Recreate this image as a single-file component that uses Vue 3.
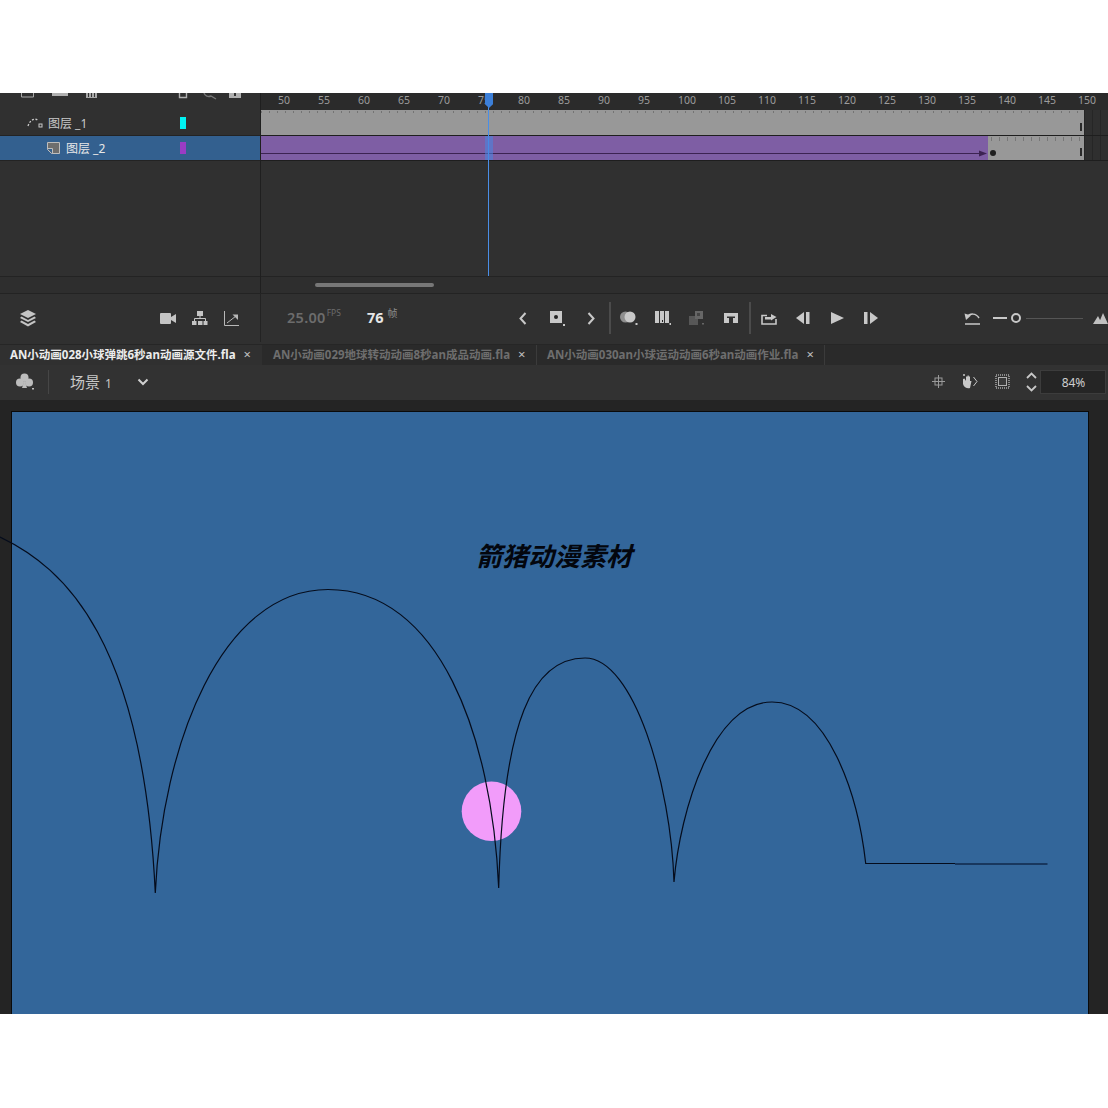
<script setup>
const frames = Array.from({ length: 21 }, (_, i) => 50 + i * 5)
const tabs = [
  { name: 'AN小动画028小球弹跳6秒an动画源文件.fla', active: true, w: 262 },
  { name: 'AN小动画029地球转动动画8秒an成品动画.fla', active: false, w: 275 },
  { name: 'AN小动画030an小球运动动画6秒an动画作业.fla', active: false, w: 288 }
]
const curve = [
  'M0 537C65 568 143 640 155.3 893',
  'C162 745 221 589.5 328 589.5',
  'C439 589.5 492 735 498.7 888',
  'C503 720 533 658 585 658',
  'C634 658 671 785 674 882',
  'C680 810 713 702 772 702',
  'C828 702 858 795 865.7 863.3',
  'L955 863.5'
].join('')
</script>

<template>
  <div class="page">
    <div class="app">
      <section class="timeline">
        <div class="layers">
          <svg class="header-icons" width="260" height="17" viewBox="0 0 260 17">
            <path d="M21.5 0V4H33.5V0" fill="none" stroke="#a8a8a8" />
            <rect x="52" y="0" width="16" height="3" fill="#b0b0b0" />
            <path d="M86 0H97V5H86Z" fill="#a8a8a8" />
            <path d="M88.5 0V4M91.5 0V4M94.5 0V4" stroke="#333" />
            <path d="M179.5 0V4.5H186.5V0" fill="none" stroke="#b0b0b0" stroke-width="1.4" />
            <path d="M204 0A5 5 0 0 0 211 3L216 6" fill="none" stroke="#777" stroke-width="1.4" />
            <path d="M229 0H241V5H229Z" fill="#b0b0b0" />
            <path d="M235 0V3" stroke="#333" stroke-width="2" />
          </svg>
          <div class="layer-row">
            <svg class="layer-icon guide" width="16" height="12" viewBox="0 0 16 12">
              <path d="M1 9C3 3 7 1 11 3" fill="none" stroke="#c8c8c8" stroke-width="1.3" stroke-dasharray="2 1.6" />
              <rect x="12" y="7" width="3" height="3" fill="none" stroke="#c8c8c8" />
            </svg>
            <span class="layer-name">图层 _1</span>
            <i class="chip cyan"></i>
          </div>
          <div class="layer-row selected">
            <svg class="layer-icon mask" width="13" height="12" viewBox="0 0 13 12">
              <path d="M.5.5H12.5V11.5H4.5L.5 7.5Z" fill="#6e6e6e" stroke="#bdbdbd" />
              <path d="M.5 6.5H5.5V11.5" fill="#33618f" stroke="#bdbdbd" />
            </svg>
            <span class="layer-name">图层 _2</span>
            <i class="chip violet"></i>
          </div>
          <div class="layers-fill"></div>
          <div class="scroll-spacer"></div>
        </div>
        <div class="tracks">
          <div class="ruler">
            <span v-for="f in frames" :key="f" class="frame">{{ f }}</span>
          </div>
          <div class="track-row one">
            <div class="span-gray dotted">
              <b class="end-mark"></b>
            </div>
            <div class="over"></div>
          </div>
          <div class="track-row two">
            <div class="tween">
              <svg class="tween-arrow" width="727" height="24" viewBox="0 0 727 24">
                <path d="M0 17.5H719" stroke="#3c2352" />
                <path d="M718 14.5L726 17.5L718 20.5Z" fill="#3c2352" />
              </svg>
            </div>
            <div class="span-rest">
              <i class="key"></i>
              <b class="end-mark"></b>
            </div>
            <div class="over"></div>
          </div>
          <div class="tracks-fill"></div>
          <div class="scrollbar-row"><i class="thumb"></i></div>
          <div class="playhead">
            <div class="handle"></div>
            <div class="glow"></div>
          </div>
        </div>
      </section>

      <section class="toolbar">
        <div class="tool-left">
          <svg class="stack" width="16" height="17" viewBox="0 0 16 17">
            <path d="M8 0L16 4L8 8L0 4Z" fill="#c4c4c4" />
            <path d="M1.5 6.5L8 10L14.5 6.5L16 8L8 12L0 8Z" fill="#c4c4c4" />
            <path d="M1.5 10.5L8 14L14.5 10.5L16 12L8 16.5L0 12Z" fill="#c4c4c4" />
          </svg>
          <div class="left-icons">
            <svg width="16" height="11" viewBox="0 0 16 11">
              <rect x="0" y="0" width="11" height="11" rx="1" fill="#c4c4c4" />
              <path d="M11 4L16 1V10L11 7Z" fill="#c4c4c4" />
            </svg>
            <svg width="16" height="15" viewBox="0 0 16 15">
              <rect x="5" y="0" width="6" height="5" fill="#c4c4c4" />
              <path d="M8 5V8M2.5 10V7.5H13.5V10" fill="none" stroke="#c4c4c4" />
              <rect x="0" y="10" width="4.5" height="4" fill="#c4c4c4" />
              <rect x="6" y="10" width="4.5" height="4" fill="#c4c4c4" />
              <rect x="11.5" y="10" width="4" height="4" fill="#c4c4c4" />
            </svg>
            <svg width="16" height="15" viewBox="0 0 16 15">
              <path d="M.5 0V14.5H15" fill="none" stroke="#b8b8b8" />
              <path d="M3 12L12 5" stroke="#b8b8b8" />
              <path d="M8.5 3.5H14V9Z" fill="#b8b8b8" />
            </svg>
          </div>
        </div>
        <div class="tool-main">
          <div class="readout">
            <span class="fps">25.00<sup>FPS</sup></span>
            <span class="current">76<sup>帧</sup></span>
          </div>
          <div class="tool-group first">
            <span class="tool"><svg width="8" height="13" viewBox="0 0 8 13"><path d="M6.5 1L1.5 6.5L6.5 12" fill="none" stroke="#c8c8c8" stroke-width="2" /></svg></span>
            <span class="tool"><svg width="15" height="15" viewBox="0 0 15 15"><rect width="12" height="12" fill="#c8c8c8" /><circle cx="6" cy="6" r="2" fill="#222" /><rect x="13" y="13" width="2" height="2" fill="#c8c8c8" /></svg></span>
            <span class="tool"><svg width="8" height="13" viewBox="0 0 8 13"><path d="M1.5 1L6.5 6.5L1.5 12" fill="none" stroke="#c8c8c8" stroke-width="2" /></svg></span>
          </div>
          <i class="vsep"></i>
          <div class="tool-group">
            <span class="tool"><svg width="18" height="14" viewBox="0 0 18 14"><circle cx="5.5" cy="6" r="5.5" fill="#8e8e8e" /><circle cx="10" cy="6" r="5.5" fill="#c8c8c8" /><rect x="15.5" y="12" width="2" height="2" fill="#c8c8c8" /></svg></span>
            <span class="tool"><svg width="16" height="14" viewBox="0 0 16 14"><rect width="4" height="12" fill="#c8c8c8" /><rect x="5" width="4" height="12" fill="#c8c8c8" /><rect x="10" width="4" height="12" fill="#c8c8c8" /><rect x="7" y="9" width="1" height="2" fill="#222" /><rect x="14.5" y="12" width="1.5" height="2" fill="#c8c8c8" /></svg></span>
            <span class="tool"><svg width="16" height="15" viewBox="0 0 16 15"><rect y="5" width="9" height="9" fill="#575757" /><rect x="6" width="8" height="8" fill="#666" /><rect x="8" y="2" width="3" height="3" fill="#444" /><rect x="13" y="12" width="2" height="1.5" fill="#666" /></svg></span>
            <span class="tool"><svg width="14" height="11" viewBox="0 0 14 11"><path d="M0 0H14V10H9V5H11V3.5H3V5H5V10H0Z" fill="#c8c8c8" /></svg></span>
          </div>
          <i class="vsep"></i>
          <div class="tool-group">
            <span class="tool"><svg width="16" height="13" viewBox="0 0 16 13"><path d="M6 3.5H1V12H15V7" fill="none" stroke="#c8c8c8" stroke-width="1.6" /><path d="M4 7.5V5H10V2L15.5 5L10 8.5V7.5Z" fill="#c8c8c8" /></svg></span>
            <span class="tool"><svg width="14" height="12" viewBox="0 0 14 12"><path d="M8 0V12L0 6Z" fill="#c8c8c8" /><rect x="10" width="3.5" height="12" fill="#c8c8c8" /></svg></span>
            <span class="tool"><svg width="13" height="12" viewBox="0 0 13 12"><path d="M0 0L13 6L0 12Z" fill="#c8c8c8" /></svg></span>
            <span class="tool"><svg width="14" height="12" viewBox="0 0 14 12"><rect width="3.5" height="12" fill="#c8c8c8" /><path d="M6 0L14 6L6 12Z" fill="#c8c8c8" /></svg></span>
          </div>
          <div class="zoomer">
            <svg width="17" height="13" viewBox="0 0 17 13">
              <path d="M1 12H16M3 5C6 1 12 1 15 6" fill="none" stroke="#c8c8c8" stroke-width="1.5" />
              <path d="M.5 1.5L7 3.5L2 8Z" fill="#c8c8c8" />
            </svg>
            <div class="slider">
              <i class="slide-on"></i>
              <i class="knob"></i>
              <i class="slide-off"></i>
            </div>
            <svg class="peaks" width="15" height="11" viewBox="0 0 15 11">
              <path d="M0 11L5 3L9 11ZM5.5 11L10 0L15 11Z" fill="#c0c0c0" />
            </svg>
          </div>
        </div>
      </section>

      <nav class="tabs">
        <div v-for="t in tabs" :key="t.name" class="tab" :class="{ active: t.active }" :style="{ width: t.w + 'px' }">
          <span class="tab-name">{{ t.name }}</span>
          <span class="tab-x">×</span>
        </div>
      </nav>

      <div class="scene-bar">
        <svg class="club" width="18" height="17" viewBox="0 0 18 17">
          <circle cx="8.5" cy="4.5" r="4" fill="#bdbdbd" />
          <circle cx="4" cy="9.5" r="4" fill="#bdbdbd" />
          <circle cx="13" cy="9.5" r="4" fill="#bdbdbd" />
          <path d="M8.5 7L11 15H6Z" fill="#bdbdbd" />
          <rect x="16" y="15" width="2" height="1.5" fill="#bdbdbd" />
        </svg>
        <i class="scene-sep"></i>
        <span class="scene-name">场景 <small>1</small></span>
        <svg class="chev" width="12" height="8" viewBox="0 0 12 8"><path d="M1.5 1.5L6 6L10.5 1.5" fill="none" stroke="#d0d0d0" stroke-width="2" /></svg>
        <div class="scene-tools">
          <svg width="13" height="13" viewBox="0 0 13 13">
            <rect x="3" y="3" width="7" height="7" fill="none" stroke="#9a9a9a" />
            <path d="M6.5 0V13M0 6.5H13" stroke="#9a9a9a" />
          </svg>
          <svg class="hand" width="17" height="17" viewBox="0 0 17 17">
            <path d="M2 6V11C3 15 7 16 9 15L10.5 8H9V3.5H7.8V7.5V2.5H6.5V7.5V3.5H5V8L3.5 5.5Z" fill="#c8c8c8" />
            <path d="M12.5 4L16 8.5L12.5 13" fill="none" stroke="#c8c8c8" />
            <circle cx="3" cy="2" r="1" fill="#c8c8c8" />
          </svg>
          <svg width="15" height="15" viewBox="0 0 15 15">
            <rect x="1" y="1" width="13" height="13" fill="none" stroke="#8a8a8a" stroke-dasharray="1 1" stroke-width="2" />
            <rect x="3.5" y="3.5" width="8" height="8" fill="#3a3a3a" stroke="#b0b0b0" />
          </svg>
          <svg class="stepper" width="11" height="20" viewBox="0 0 11 20">
            <path d="M1 6L5.5 1.5L10 6M1 14L5.5 18.5L10 14" fill="none" stroke="#c8c8c8" stroke-width="1.8" />
          </svg>
          <div class="zoom-input">84%</div>
        </div>
      </div>

      <main class="canvas">
        <div class="stage"></div>
        <div class="watermark">箭猪动漫素材</div>
        <svg class="drawing" width="1108" height="614" viewBox="0 400 1108 614">
          <circle cx="491.5" cy="811.3" r="29.8" fill="#f29cfa" />
          <path :d="curve" fill="none" stroke="#050c1c" stroke-width="1.2" />
          <path d="M955 864H1047.5" fill="none" stroke="#10294a" stroke-width="1.6" />
        </svg>
      </main>
    </div>
  </div>
</template>

<style scoped>
.page {
  width: 1108px;
  height: 1108px;
  padding: 93px 0 94px;
  box-sizing: border-box;
  background: #fff;
  font-family: "Noto Sans", "Noto Sans CJK SC", sans-serif;
}
.app {
  height: 100%;
  display: flex;
  flex-direction: column;
  background: #303030;
  overflow: hidden;
}

/* timeline */
.timeline {
  height: 200px;
  display: flex;
}
.layers {
  width: 260px;
  display: flex;
  flex-direction: column;
  border-right: 1px solid #1f1f1f;
  flex: none;
}
.header-icons {
  display: block;
  flex: none;
}
.layer-row {
  height: 25px;
  display: flex;
  align-items: center;
  border-bottom: 1px solid #232323;
  color: #c9c9c9;
  font-size: 12px;
  flex: none;
}
.layer-row.selected {
  height: 24px;
  background: #33608f;
  color: #e8e8e8;
}
.layer-icon { flex: none; }
.guide { margin-left: 27px; }
.mask { margin-left: 47px; }
.layer-name {
  margin-left: 5px;
  width: 133px;
  white-space: nowrap;
  flex: none;
}
.selected .layer-name {
  margin-left: 6px;
  width: 115px;
}
.chip {
  width: 6px;
  height: 12px;
  margin-left: -1px;
  flex: none;
}
.cyan { background: #00f2f2; }
.violet { background: #9a3cc4; }
.layers-fill {
  flex: 1;
  border-bottom: 1px solid #232323;
}
.scroll-spacer {
  height: 16px;
  background: #2e2e2e;
  flex: none;
}

.tracks {
  flex: 1;
  position: relative;
  display: flex;
  flex-direction: column;
  min-width: 0;
}
.ruler {
  height: 17px;
  display: flex;
  padding-left: 17px;
  background: #2b2b2b;
  color: #9c9c9c;
  font-size: 10.5px;
  line-height: 15px;
  overflow: hidden;
  flex: none;
}
.frame {
  width: 40px;
  flex: none;
}
.track-row {
  display: flex;
  flex: none;
  border-bottom: 1px solid #1e1e1e;
}
.track-row.one { height: 25px; }
.track-row.two { height: 24px; }
.span-gray {
  width: 823px;
  position: relative;
  flex: none;
}
.dotted {
  background-color: #989898;
  background-image: repeating-linear-gradient(90deg, #747474 0 1px, transparent 1px 8px);
  background-size: 100% 2px;
  background-position: 0 1px;
  background-repeat: no-repeat;
}
.end-mark {
  position: absolute;
  right: 2px;
  top: 13px;
  width: 2px;
  height: 8px;
  background: #2a2a2a;
}
.tween {
  width: 727px;
  background: #7e5ea4;
  flex: none;
}
.tween-arrow { display: block; }
.span-rest {
  width: 96px;
  position: relative;
  background-color: #989898;
  background-image: repeating-linear-gradient(90deg, #777 0 1px, transparent 1px 8px);
  background-size: 100% 4px;
  background-repeat: no-repeat;
  background-position: 3px 1px;
  flex: none;
}
.key {
  position: absolute;
  left: 2px;
  top: 14px;
  width: 6px;
  height: 6px;
  border-radius: 50%;
  background: #1f1f1f;
}
.two .end-mark { top: 12px; }
.over {
  flex: 1;
  background: repeating-linear-gradient(90deg, #262626 0 1px, #2f2f2f 1px 8px);
}
.tracks-fill {
  flex: 1;
  border-bottom: 1px solid #232323;
}
.scrollbar-row {
  height: 16px;
  background: #2e2e2e;
  position: relative;
  flex: none;
}
.thumb {
  position: absolute;
  left: 54px;
  top: 6px;
  width: 119px;
  height: 4px;
  border-radius: 2px;
  background: #777;
}
.playhead {
  position: absolute;
  left: 227px;
  top: 0;
  bottom: 17px;
  width: 1px;
  background: #4a8ee6;
}
.handle {
  position: absolute;
  left: -3px;
  top: 0;
  width: 8px;
  height: 15px;
  background: #3c7fd8;
  clip-path: polygon(0 0, 100% 0, 100% 75%, 50% 100%, 0 75%);
}
.glow {
  position: absolute;
  left: -3px;
  top: 43px;
  width: 8px;
  height: 24px;
  background: rgba(70, 135, 225, 0.55);
}

/* toolbar */
.toolbar {
  height: 49px;
  display: flex;
  align-items: center;
  flex: none;
  border-top: 1px solid #232323;
  box-sizing: border-box;
}
.tool-left {
  width: 261px;
  height: 100%;
  display: flex;
  align-items: center;
  border-right: 1px solid #232323;
  box-sizing: border-box;
  padding-left: 20px;
  flex: none;
}
.stack { flex: none; }
.left-icons {
  display: flex;
  align-items: center;
  gap: 16px;
  margin-left: 124px;
}
.tool-main {
  flex: 1;
  display: flex;
  align-items: center;
  min-width: 0;
}
.readout {
  width: 245px;
  display: flex;
  padding-left: 26px;
  padding-bottom: 2px;
  box-sizing: border-box;
  align-items: center;
  flex: none;
}
.fps {
  width: 80px;
  color: #6c6c6c;
  font-size: 14.5px;
  font-weight: 600;
  letter-spacing: 0.3px;
  flex: none;
}
.fps sup {
  margin-left: 1px;
  font-size: 8.5px;
  font-weight: 400;
  vertical-align: 7px;
  line-height: 0;
  letter-spacing: 0;
}
.current {
  color: #e6e6e6;
  font-size: 14.5px;
  font-weight: 700;
}
.current sup {
  margin-left: 4px;
  color: #8c8c8c;
  font-size: 10px;
  font-weight: 400;
  vertical-align: 6px;
  line-height: 0;
}
.tool-group { display: flex; flex: none; }
.tool {
  width: 34px;
  height: 24px;
  display: flex;
  align-items: center;
  justify-content: center;
}
.vsep {
  width: 2px;
  height: 32px;
  margin: 0 1px;
  background: #4b4b4b;
  flex: none;
}
.zoomer {
  display: flex;
  align-items: center;
  margin-left: 76px;
  flex: none;
}
.slider {
  display: flex;
  align-items: center;
  margin-left: 12px;
  width: 90px;
  flex: none;
}
.slide-on {
  width: 14px;
  height: 2px;
  background: #c8c8c8;
}
.knob {
  width: 6px;
  height: 6px;
  margin-left: 4px;
  border: 2px solid #c8c8c8;
  border-radius: 50%;
}
.slide-off {
  flex: 1;
  height: 1px;
  margin-left: 5px;
  background: #555;
}
.peaks {
  margin-left: 10px;
  flex: none;
}

/* tabs */
.tabs {
  height: 21px;
  margin-top: 2px;
  display: flex;
  background: #2a2a2a;
  border-top: 1px solid #262626;
  box-sizing: border-box;
  flex: none;
}
.tab {
  display: flex;
  align-items: center;
  padding: 0 0 3px 11px;
  box-sizing: border-box;
  border-right: 1px solid #3b3b3b;
  color: #6e6e6e;
  font-size: 11.5px;
  font-weight: 700;
  white-space: nowrap;
  flex: none;
}
.tab.active {
  color: #ececec;
  background: #303030;
  border-right: 0;
  padding-left: 10px;
}
.tab:last-child { padding-left: 10px; }
.tab-name { flex: none; }
.tab-x {
  margin-left: 8px;
  color: #c0c0c0;
  font-size: 13px;
  line-height: 14px;
  font-weight: 400;
}

/* scene bar */
.scene-bar {
  height: 35px;
  display: flex;
  align-items: center;
  padding: 0 0 2px 16px;
  box-sizing: border-box;
  background: #323232;
  flex: none;
}
.club { flex: none; }
.scene-sep {
  width: 1px;
  height: 24px;
  margin-left: 14px;
  background: #464646;
  flex: none;
}
.scene-name {
  margin-left: 21px;
  width: 68px;
  color: #c8c8c8;
  font-size: 15px;
  flex: none;
}
.scene-name small { font-size: 12px; margin-left: 1px; }
.chev { flex: none; margin-left: -1px; }
.scene-tools {
  display: flex;
  align-items: center;
  margin-left: auto;
  gap: 16px;
}
.hand { margin-right: 1px; }
.stepper { margin-right: -13px; }
.zoom-input {
  width: 66px;
  height: 24px;
  margin-right: 2px;
  background: #252525;
  border: 1px solid #3c3c3c;
  box-sizing: border-box;
  color: #cfcfcf;
  font-size: 12px;
  line-height: 23px;
  text-align: center;
  text-indent: 1px;
}

/* canvas */
.canvas {
  flex: 1;
  position: relative;
  padding: 11px 19px 0 11px;
  background: #242424;
  overflow: hidden;
  display: flex;
}
.stage {
  flex: 1;
  background: #33669a;
  border: 1px solid #0a0a0a;
  border-bottom: 0;
}
.drawing {
  position: absolute;
  left: 0;
  top: 0;
}
.watermark {
  position: absolute;
  left: 476px;
  top: 138px;
  color: #03060e;
  font-family: "Noto Sans CJK SC", sans-serif;
  font-size: 26px;
  line-height: 34px;
  font-weight: 700;
  font-style: italic;
  white-space: nowrap;
  z-index: 1;
}
</style>
